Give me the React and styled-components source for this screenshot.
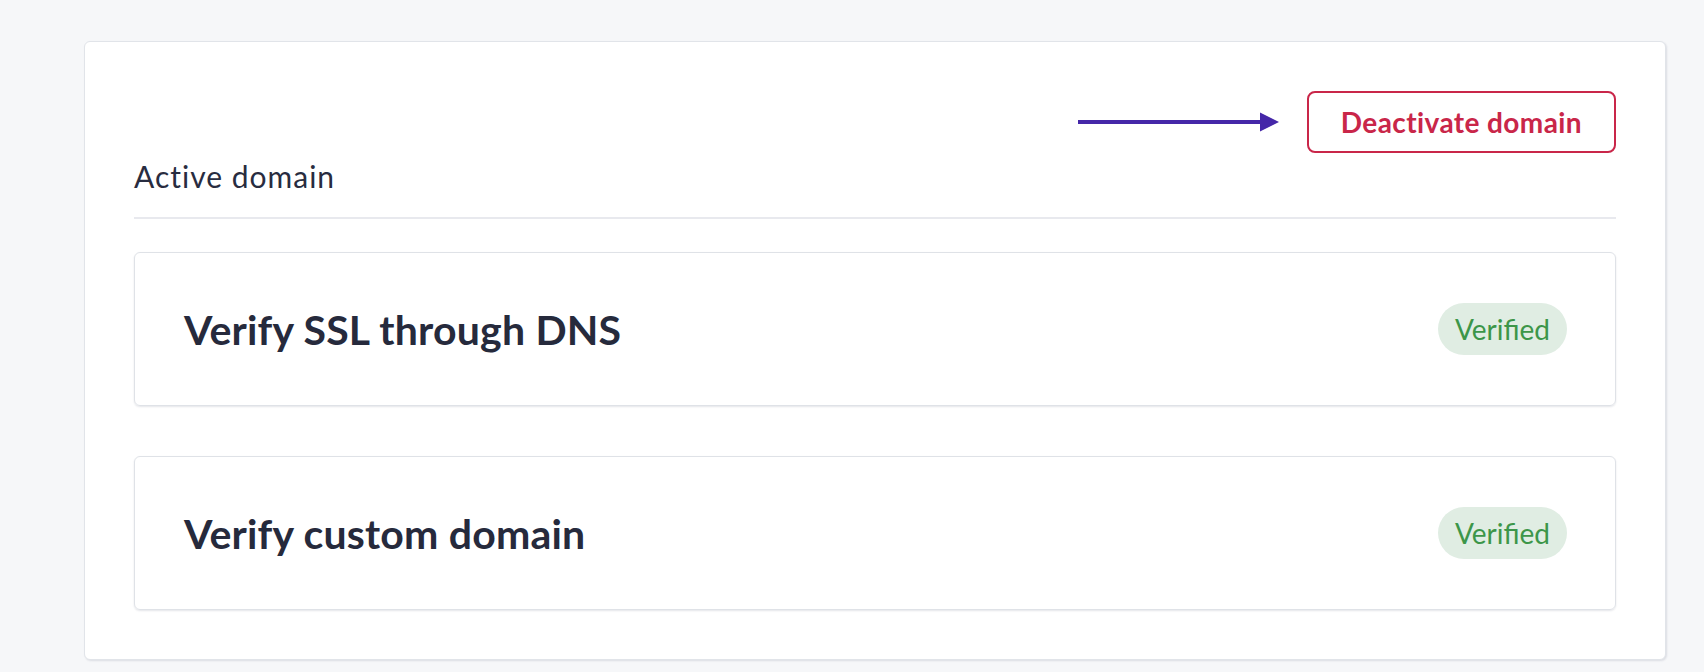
import React from "react";
import styled, { createGlobalStyle } from "styled-components";

const GlobalStyle = createGlobalStyle`
  html, body { margin: 0; padding: 0; background: #f6f7f9; }
  body { font-family: Lato, "Noto Sans", sans-serif; -webkit-font-smoothing: antialiased; }
  * { box-sizing: border-box; }
`;

const Page = styled.div`
  padding: 41px 38px 12px 84px;
`;

const Panel = styled.section`
  background: #fff;
  border: 1px solid #e1e4e9;
  border-radius: 6px;
  box-shadow: 1px 1px 2px rgba(30, 40, 70, 0.12);
  padding: 49px;
  display: flex;
  flex-direction: column;
`;

const Toolbar = styled.div`
  display: flex;
  justify-content: flex-end;
  align-items: center;
  gap: 28px;
`;

const DangerButton = styled.button`
  height: 62px;
  padding: 0 32px;
  border: 2px solid #c92649;
  border-radius: 8px;
  background: #fff;
  color: #c92649;
  font-family: Lato, "Noto Sans", sans-serif;
  font-size: 28px;
  font-weight: 700;
  letter-spacing: 0.4px;
  cursor: pointer;
`;

const SectionTitle = styled.h2`
  margin: 3px 0 0;
  font-size: 30px;
  line-height: 40px;
  font-weight: 400;
  letter-spacing: 1px;
  color: #282c40;
`;

const Divider = styled.hr`
  margin: 21px 0 0;
  border: 0;
  height: 2px;
  background: #e8e9ee;
`;

const CardList = styled.div`
  margin-top: 33px;
  display: flex;
  flex-direction: column;
  gap: 50px;
`;

const StepCard = styled.div`
  height: 154px;
  padding: 0 48px 0 49px;
  border: 1px solid #dfe2e7;
  border-radius: 6px;
  box-shadow: 0 1px 2px rgba(30, 40, 70, 0.12);
  display: flex;
  align-items: center;
  justify-content: space-between;
`;

const StepTitle = styled.h3`
  margin: 0;
  font-size: 41px;
  font-weight: 700;
  color: #262a3c;
  letter-spacing: 0.2px;
`;

const Badge = styled.span`
  height: 52px;
  padding: 0 17px;
  border-radius: 26px;
  background: #e0ede3;
  color: #3c9649;
  font-size: 28px;
  display: inline-flex;
  align-items: center;
`;

const Arrow = () => (
  <svg width="201" height="20" viewBox="0 0 201 20" aria-hidden="true">
    <line x1="0" y1="10" x2="184" y2="10" stroke="#4527a8" strokeWidth="4" />
    <polygon points="182,0.5 201,10 182,19.5" fill="#4527a8" />
  </svg>
);

const steps = ["Verify SSL through DNS", "Verify custom domain"];

export default function App() {
  return (
    <>
      <GlobalStyle />
      <Page>
        <Panel>
          <Toolbar>
            <Arrow />
            <DangerButton>Deactivate domain</DangerButton>
          </Toolbar>
          <SectionTitle>Active domain</SectionTitle>
          <Divider />
          <CardList>
            {steps.map((s) => (
              <StepCard key={s}>
                <StepTitle>{s}</StepTitle>
                <Badge>Verified</Badge>
              </StepCard>
            ))}
          </CardList>
        </Panel>
      </Page>
    </>
  );
}
